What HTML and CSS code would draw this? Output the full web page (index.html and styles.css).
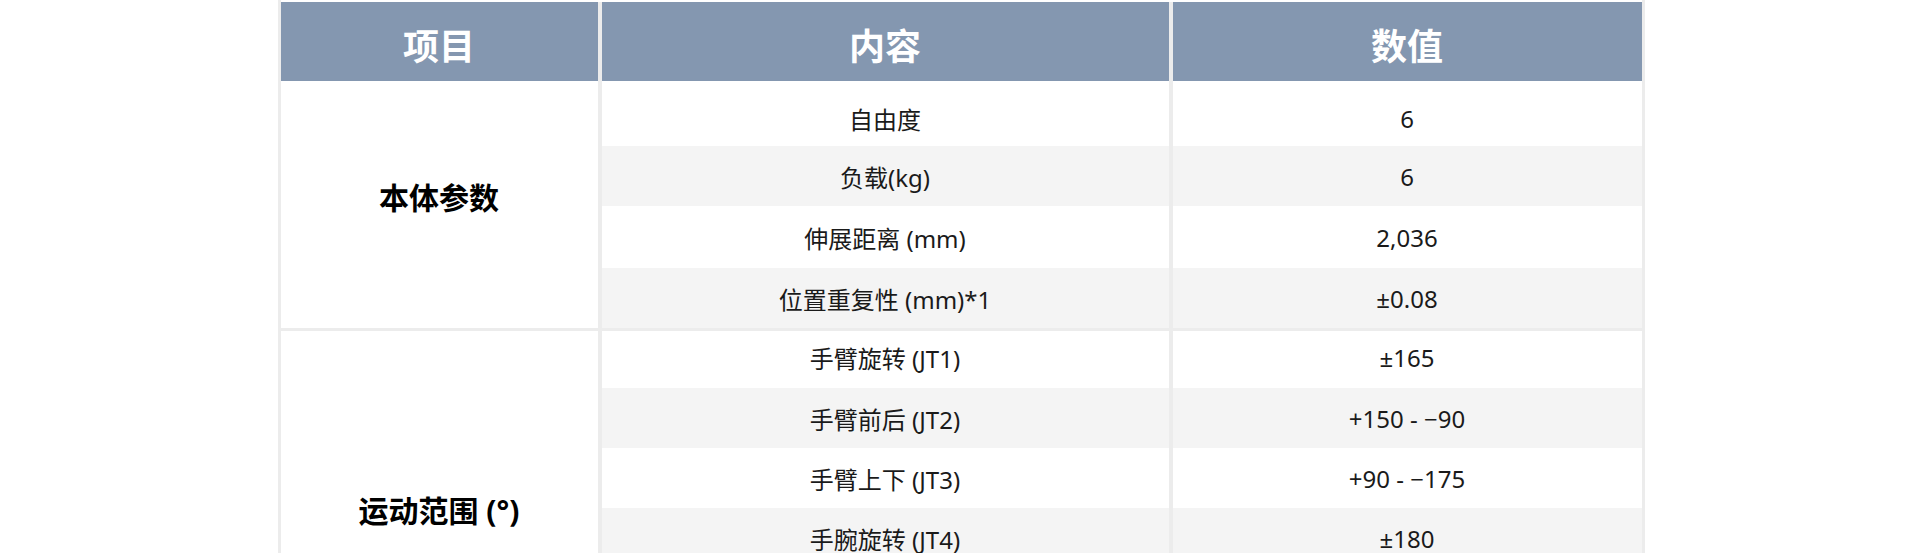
FILE: index.html
```html
<!DOCTYPE html>
<html lang="zh-CN">
<head>
<meta charset="utf-8">
<title>规格参数</title>
<link rel="stylesheet" href="styles.css">
</head>
<body>
<div class="page">
  <div class="spec">
    <div class="head">
      <div class="hcell">项目</div>
      <div class="hcell">内容</div>
      <div class="hcell">数值</div>
    </div>

    <div class="group">
      <div class="label">本体参数</div>
      <div class="items">
        <div class="item r65 first"><div class="cell">自由度</div><div class="cell">6</div></div>
        <div class="item r60 alt"><div class="cell">负载(kg)</div><div class="cell">6</div></div>
        <div class="item r61"><div class="cell">伸展距离 (mm)</div><div class="cell">2,036</div></div>
        <div class="item r60 alt"><div class="cell">位置重复性 (mm)*1</div><div class="cell">±0.08</div></div>
      </div>
    </div>

    <div class="group next">
      <div class="label">运动范围 (°)</div>
      <div class="items">
        <div class="item r57 lead"><div class="cell">手臂旋转 (JT1)</div><div class="cell">±165</div></div>
        <div class="item r60 alt"><div class="cell">手臂前后 (JT2)</div><div class="cell">+150 - −90</div></div>
        <div class="item r60"><div class="cell">手臂上下 (JT3)</div><div class="cell">+90 - −175</div></div>
        <div class="item r60 alt"><div class="cell">手腕旋转 (JT4)</div><div class="cell">±180</div></div>
        <div class="item r60"><div class="cell">手腕摆动 (JT5)</div><div class="cell">±135</div></div>
        <div class="item r60 alt"><div class="cell">手腕旋转 (JT6)</div><div class="cell">±360</div></div>
      </div>
    </div>
  </div>
</div>
</body>
</html>
```

FILE: styles.css
```css
html, body {
  margin: 0;
  padding: 0;
  background: #ffffff;
}

body {
  font-family: "Noto Sans", "Noto Sans CJK SC", sans-serif;
  color: #1a1a1a;
  overflow: hidden;
}

.page {
  display: flex;
  justify-content: center;
  padding-left: 2px;
}

.spec {
  width: 1361px;
  border-left: 3px solid #ececec;
  border-right: 3px solid #ececec;
  padding-top: 2px;
  background: #ffffff;
}

.head {
  display: grid;
  grid-template-columns: 317px 567px 469px;
  column-gap: 4px;
  background: #ececec;
  height: 79px;
}

.hcell {
  background: #8497b0;
  color: #ffffff;
  font-size: 36px;
  font-weight: 700;
  display: flex;
  align-items: center;
  justify-content: center;
  padding-top: 5px;
}

.group {
  display: grid;
  grid-template-columns: 317px 1040px;
  column-gap: 4px;
  background: #ececec;
}

.group.next {
  border-top: 3px solid #ececec;
}

.label {
  background: #ffffff;
  display: flex;
  align-items: center;
  justify-content: center;
  font-size: 30px;
  font-weight: 700;
  color: #000000;
  padding-bottom: 18px;
}

.group.next .label {
  padding-bottom: 2px;
}

.items {
  display: flex;
  flex-direction: column;
}

.item {
  display: grid;
  grid-template-columns: 567px 469px;
  column-gap: 4px;
  background: #ececec;
}

.cell {
  background: #ffffff;
  display: flex;
  align-items: center;
  justify-content: center;
  font-size: 24px;
}

.item.alt .cell {
  background: #f4f4f4;
}

.item.first .cell {
  padding-top: 9px;
}

.item.lead .cell {
  padding-bottom: 4px;
}

.r65 { height: 65px; }
.r61 { height: 62px; }
.r60 { height: 60px; }
.r57 { height: 57px; }
```
